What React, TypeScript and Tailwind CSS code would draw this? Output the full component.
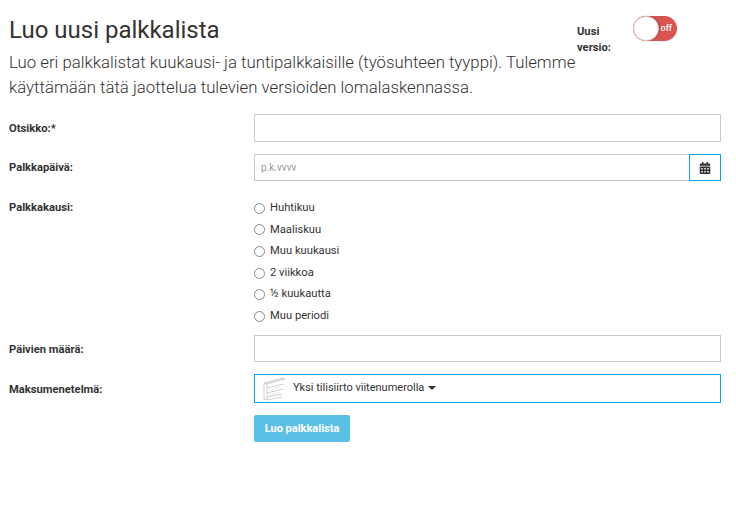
import { FaCalendarAlt } from "react-icons/fa";

const periods = ["Huhtikuu", "Maaliskuu", "Muu kuukausi", "2 viikkoa", "½ kuukautta", "Muu periodi"];

function Label({ children, className = "pt-[2px]" }: { children: React.ReactNode; className?: string }) {
  return <label className={`w-[245px] shrink-0 text-[11.2px] font-bold leading-[16px] text-[#333] ${className}`}>{children}</label>;
}

function Ledger() {
  return (
    <svg width="36" height="25" viewBox="0 0 36 25" fill="none" stroke="#c4c4c4" strokeWidth="0.8">
      <path d="M7 7 L26 2 L28 3 L9 8 Z" fill="#efefef" />
      <path d="M7 7 V23 M10 8 V24 M7 23 L10 24 L25 21" />
      <path d="M10 12 L26 8 L27 9 M10 17 L26 13 M10 21 L25 18" />
      <path d="M12 6 L23 3.5 M12 14 L23 11 M12 19 L22 16.5" stroke="#e0e0e0" />
    </svg>
  );
}

export default function App() {
  return (
    <div className="h-[520px] w-[736px] overflow-hidden bg-white font-['Roboto',sans-serif] text-[#333]">
      <div className="flex pl-[9px] pt-[16px]">
        <div className="w-[570px] shrink-0">
          <h1 className="text-[24px] leading-[28px] text-[#333]">Luo uusi palkkalista</h1>
          <p className="mt-[6px] text-[16.8px] font-light leading-[25px] text-[#333]">
            Luo eri palkkalistat kuukausi- ja tuntipalkkaisille (työsuhteen tyyppi). Tulemme käyttämään tätä jaottelua tulevien versioiden lomalaskennassa.
          </p>
        </div>
        <div className="-ml-[2px] w-[56px] pt-[8px] text-[11.2px] font-bold leading-[16px]">
          Uusi versio:
        </div>
        <div className="relative flex h-[25px] w-[44px] items-center justify-end rounded-full bg-[#d9534f] pr-[5px] text-[9px] font-medium text-white">
          off
          <span className="absolute left-0 top-0 h-[25px] w-[26px] rounded-full border border-[#d8c4c4] bg-white shadow-[1px_0_2px_rgba(0,0,0,0.2)]" />
        </div>
      </div>

      <div className="mt-[14px] flex flex-col pl-[9px]">
        <div className="flex items-center">
          <Label>Otsikko:*</Label>
          <input type="text" className="h-[28px] w-[467px] border border-[#c8c8c8] bg-white" />
        </div>

        <div className="mt-[12px] flex items-center">
          <Label className="pt-0">Palkkapäivä:</Label>
          <input type="text" placeholder="p.k.vvvv" className="h-[27px] w-[435px] border border-[#c8c8c8] border-r-0 bg-white px-[6px] text-[10px] placeholder:text-[#999]" />
          <button className="flex h-[27px] w-[32px] items-center justify-center border border-[#00a7e1] text-[#333]">
            <FaCalendarAlt size={12} />
          </button>
        </div>

        <div className="mt-[16.6px] flex">
          <Label className="pt-[2px]">Palkkakausi:</Label>
          <div className="flex flex-col">
            {periods.map((p) => (
              <div key={p} className="flex h-[21.6px] items-center text-[11.2px] text-[#333]">
                <span className="mr-[5px] h-[11px] w-[11px] rounded-full border border-[#8a8a8a] bg-white" />
                {p}
              </div>
            ))}
          </div>
        </div>

        <div className="mt-[7.4px] flex items-center">
          <Label className="pt-[4px]">Päivien määrä:</Label>
          <input type="text" className="h-[27px] w-[467px] border border-[#c8c8c8] bg-white" />
        </div>

        <div className="mt-[12px] flex items-center">
          <Label className="pt-[4px]">Maksumenetelmä:</Label>
          <div className="flex h-[29px] w-[467px] items-center border border-[#00a7e1] pl-[2px] text-[11px] text-[#333]">
            <Ledger />
            <span>Yksi tilisiirto viitenumerolla</span>
            <span className="ml-[4px] h-0 w-0 border-x-[4px] border-t-[4px] border-x-transparent border-t-[#333]" />
          </div>
        </div>

        <div className="mt-[12px] pl-[245px]">
          <button className="h-[27px] w-[96px] rounded-[2px] bg-[#5bc0e8] pt-[2px] text-[11px] font-bold text-white">Luo palkkalista</button>
        </div>
      </div>
    </div>
  );
}
